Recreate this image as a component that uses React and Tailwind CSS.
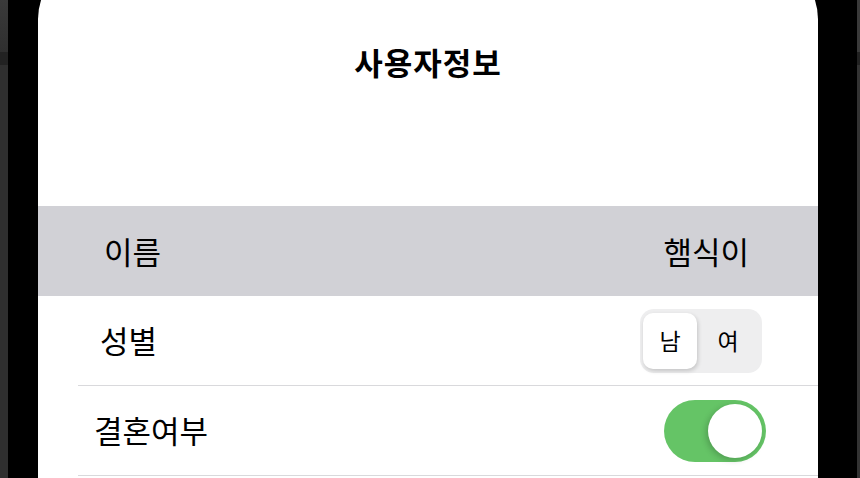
import React from "react";

export default function App() {
  const font = { fontFamily: '"Noto Sans CJK KR", "Noto Sans", sans-serif' };
  return (
    <div className="flex h-[478px] w-[860px] overflow-hidden bg-black" style={font}>
      <div className="flex w-[8px] flex-col bg-[#2f2f2f]">
        <div className="h-[52px] bg-gradient-to-b from-[#3a3a3a] to-[#2f2f2f]" />
        <div className="h-[13px] bg-[#222222]" />
        <div className="flex-1 bg-[#2f2f2f]" />
      </div>
      <div className="w-[30px] bg-black" />
      <div className="mt-[-41px] flex w-[780px] flex-col rounded-t-[60px] bg-white pt-[41px] text-black">
        <div className="flex h-[124px] items-center justify-center text-[31px] font-bold tracking-[1px]">
          사용자정보
        </div>
        <div className="h-[82px]" />
        <div className="flex h-[90px] items-center justify-between bg-[#d1d1d6] pl-[66px] pr-[69px] text-[31px]">
          <span>이름</span>
          <span>햄식이</span>
        </div>
        <div className="ml-[40px] flex h-[90px] items-center justify-between border-b border-[#d9d9dc] pl-[22px] pr-[56px]">
          <span className="text-[31px]">성별</span>
          <div className="flex h-[64px] w-[122px] items-center rounded-[14px] bg-[#eeeeef] p-[3px]">
            <div className="flex h-[56px] w-[54px] items-center justify-center rounded-[10px] bg-white text-[23px] shadow-[1px_2px_4px_rgba(0,0,0,0.18)]">
              남
            </div>
            <div className="flex flex-1 items-center justify-center text-[23px]">여</div>
          </div>
        </div>
        <div className="ml-[40px] flex h-[90px] items-center justify-between border-b border-[#d9d9dc] pl-[16px] pr-[52px]">
          <span className="text-[31px]">결혼여부</span>
          <div className="flex h-[62px] w-[102px] items-center justify-end rounded-full bg-[#65c466] p-[4px]">
            <div className="h-[54px] w-[54px] rounded-full bg-white shadow-[-2px_2px_6px_rgba(0,0,0,0.2)]" />
          </div>
        </div>
      </div>
      <div className="w-[39px] bg-black" />
      <div className="flex w-[3px] flex-col bg-[#333333]">
        <div className="h-[52px] bg-[#3a3a3a]" />
        <div className="h-[13px] bg-[#222222]" />
        <div className="flex-1 bg-[#333333]" />
      </div>
    </div>
  );
}
